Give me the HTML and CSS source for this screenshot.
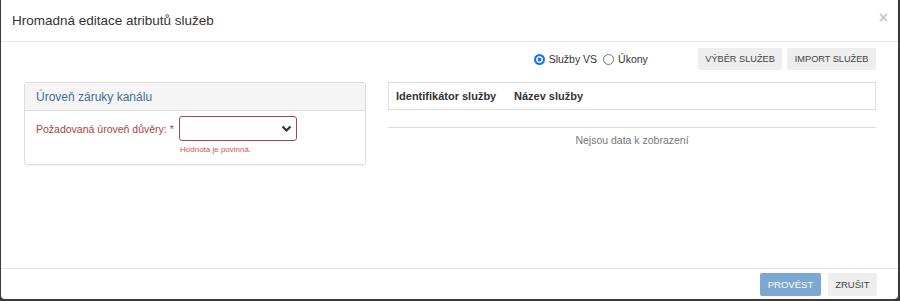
FILE: index.html
```html
<!DOCTYPE html>
<html lang="cs">
<head>
    <meta charset="UTF-8">
    <title>Hromadná editace atributů služeb</title>
    <link rel="stylesheet" href="styles.css">
</head>
<body>

<div class="modal">
    <div class="modal-header">
        <h4 class="modal-title">Hromadná editace atributů služeb</h4>
        <span class="close">&times;</span>
    </div>

    <div class="modal-body">
        <div class="toolbar">
            <label class="radio"><span class="dot checked"></span>Služby VS</label>
            <label class="radio"><span class="dot"></span>Úkony</label>
            <button class="btn btn-default first">Výběr služeb</button>
            <button class="btn btn-default">Import služeb</button>
        </div>

        <div class="columns">
            <div class="panel">
                <div class="panel-heading">Úroveň záruky kanálu</div>
                <div class="panel-body">
                    <label class="field-label">Požadovaná úroveň důvěry: *</label>
                    <div class="field">
                        <div class="select">
                            <svg width="11" height="8" viewBox="0 0 11 8"><path d="M1.5 1.5 L5.5 5.5 L9.5 1.5" fill="none" stroke="#333" stroke-width="2.2"/></svg>
                        </div>
                        <div class="help">Hodnota je povinná.</div>
                    </div>
                </div>
            </div>

            <div class="grid">
                <div class="grid-header">
                    <span class="col-id">Identifikátor služby</span>
                    <span>Název služby</span>
                </div>
                <div class="grid-empty">Nejsou data k zobrazení</div>
            </div>
        </div>
    </div>

    <div class="modal-footer">
        <button class="btn btn-primary">Provést</button>
        <button class="btn btn-default">Zrušit</button>
    </div>
</div>

</body>
</html>
```

FILE: styles.css
```css
body {
    margin: 0;
    background: #3a3a3a;
    font-family: "Liberation Sans", Arial, sans-serif;
    color: #333;
}
.modal {
    width: 897px;
    height: 299px;
    margin-left: 1px;
    background: #fff;
    border-radius: 0 0 4px 4px;
    display: flex;
    flex-direction: column;
}
.modal-header {
    height: 42px;
    border-bottom: 1px solid #e5e5e5;
    display: flex;
    align-items: center;
    justify-content: space-between;
    padding: 0 10px 0 11px;
    box-sizing: border-box;
    flex-shrink: 0;
}
.modal-title {
    margin: 0;
    font-size: 13.5px;
    font-weight: normal;
    color: #333;
}
.close {
    font-size: 16px;
    font-weight: bold;
    color: #c8c8c8;
    margin-top: -6px;
}
.modal-body {
    flex: 1;
    padding: 5px 22px 0 23px;
}
.toolbar {
    display: flex;
    align-items: center;
    justify-content: flex-end;
    height: 24px;
}
.radio {
    display: flex;
    align-items: center;
    font-size: 10.5px;
    margin-right: 6px;
}
.dot {
    width: 11px;
    height: 11px;
    border: 1px solid #767676;
    border-radius: 50%;
    margin-right: 4px;
    box-sizing: border-box;
}
.dot.checked {
    border: 2px solid #1a73e8;
    background: #1a73e8;
    box-shadow: inset 0 0 0 1.5px #fff;
}
.btn {
    font-family: "Liberation Sans", Arial, sans-serif;
    font-size: 9.2px;
    text-transform: uppercase;
    border: none;
    border-radius: 2px;
    padding: 0 7.5px;
    height: 22px;
    margin-left: 5px;
    color: #444;
    cursor: pointer;
}
.btn.first {
    margin-left: 44px;
}
.btn-default {
    background: #eeeeee;
}
.btn-primary {
    background: #7ba7d2;
    color: #fff;
}
.columns {
    display: flex;
    gap: 22px;
    margin-top: 11px;
}
.panel {
    width: 342px;
    height: 83px;
    border: 1px solid #ddd;
    border-radius: 3px;
    box-sizing: border-box;
    box-shadow: 0 1px 1px rgba(0, 0, 0, 0.05);
}
.panel-heading {
    height: 28px;
    background: #f5f5f5;
    border-bottom: 1px solid #ddd;
    box-sizing: border-box;
    padding: 0 11px;
    line-height: 28px;
    font-size: 12px;
    color: #3e6d9c;
}
.panel-body {
    display: flex;
    padding: 5px 0 0 11px;
}
.field-label {
    font-size: 10.5px;
    color: #a94442;
    margin-top: 7px;
    width: 143px;
    white-space: nowrap;
}
.select {
    width: 118px;
    height: 25px;
    border: 1px solid #a94442;
    border-radius: 3px;
    box-sizing: border-box;
    display: flex;
    align-items: center;
    justify-content: flex-end;
    padding-right: 4px;
}
.help {
    font-size: 8px;
    color: #d9534f;
    margin-top: 4px;
    padding-left: 1px;
}
.grid {
    flex: 1;
}
.grid-header {
    height: 28px;
    border: 1px solid #ddd;
    box-sizing: border-box;
    display: flex;
    align-items: center;
    padding-left: 7px;
    font-size: 11px;
    font-weight: bold;
}
.col-id {
    width: 118px;
}
.grid-empty {
    margin-top: 17px;
    border-top: 1px solid #ddd;
    text-align: center;
    padding-top: 6px;
    font-size: 10.5px;
    color: #777;
}
.modal-footer {
    height: 26px;
    border-top: 1px solid #e5e5e5;
    display: flex;
    align-items: flex-start;
    justify-content: flex-end;
    padding: 4px 21px 0 0;
    flex-shrink: 0;
}
.modal-footer .btn {
    height: 23px;
    margin-left: 7px;
    font-size: 9.5px;
}
```
